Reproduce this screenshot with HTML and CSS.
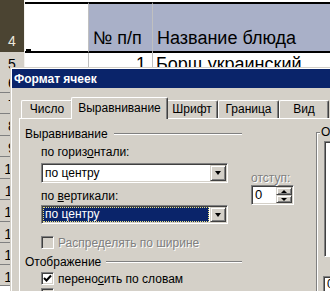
FILE: index.html
```html
<!DOCTYPE html>
<html lang="ru">
<head>
    <meta charset="UTF-8">
    <title>Формат ячеек</title>
    <link rel="stylesheet" href="styles.css">
</head>
<body>
    <div class="sheet">
        <div class="row r4">
            <div class="rh sel">4</div>
            <div class="cell colA"></div>
            <div class="cell hd">№ п/п</div>
            <div class="cell hd last">Название блюда</div>
        </div>
        <div class="row r5">
            <div class="rh">5</div>
            <div class="cell"></div>
            <div class="cell num">1</div>
            <div class="cell last">Борщ украинский</div>
        </div>
        <div class="row"><div class="rh">6</div><div class="cell"></div><div class="cell"></div><div class="cell last"></div></div>
        <div class="row"><div class="rh">7</div><div class="cell"></div><div class="cell"></div><div class="cell last"></div></div>
        <div class="row"><div class="rh">8</div><div class="cell"></div><div class="cell"></div><div class="cell last"></div></div>
        <div class="row"><div class="rh">9</div><div class="cell"></div><div class="cell"></div><div class="cell last"></div></div>
        <div class="row"><div class="rh">10</div><div class="cell"></div><div class="cell"></div><div class="cell last"></div></div>
        <div class="row"><div class="rh">11</div><div class="cell"></div><div class="cell"></div><div class="cell last"></div></div>
        <div class="row"><div class="rh">12</div><div class="cell"></div><div class="cell"></div><div class="cell last"></div></div>
        <div class="row"><div class="rh">13</div><div class="cell"></div><div class="cell"></div><div class="cell last"></div></div>
        <div class="row"><div class="rh">14</div><div class="cell"></div><div class="cell"></div><div class="cell last"></div></div>
        <div class="row"><div class="rh">15</div><div class="cell"></div><div class="cell"></div><div class="cell last"></div></div>
    </div>

    <!-- dialog window over the sheet -->
    <div class="dialog">
        <div class="title">Формат ячеек</div>
        <div class="dbody">
            <div class="tabs">
                <div class="tab w1">Число</div>
                <div class="tab sel">Выравнивание</div>
                <div class="tab w3">Шрифт</div>
                <div class="tab w4">Граница</div>
                <div class="tab w5">Вид</div>
            </div>
            <div class="panel">
                <div class="left">
                    <div class="legend">Выравнивание</div>
                    <div class="align">
                        <div class="combos">
                            <div class="lbl">по гориз<u>о</u>нтали:</div>
                            <div class="combo">
                                <span class="val">по центру</span>
                                <span class="btn"></span>
                            </div>
                            <div class="lbl lbl2">по <u>в</u>ертикали:</div>
                            <div class="combo combo2">
                                <span class="val hl">по центру</span>
                                <span class="btn"></span>
                            </div>
                        </div>
                        <div class="indent">
                            <div class="lbl off">отступ:</div>
                            <div class="spin">
                                <span class="val">0</span>
                                <span class="arrows">
                                    <span class="sbtn up"></span>
                                    <span class="sbtn down"></span>
                                </span>
                            </div>
                        </div>
                    </div>
                    <div class="check dis">
                        <span class="box"></span>
                        <span class="off">Распределять по ширине</span>
                    </div>
                    <div class="legend legend2">Отображение</div>
                    <div class="check c2">
                        <span class="box on">
                            <svg width="9" height="9" viewBox="0 0 9 9"><path d="M1 4 L3.5 6.5 L8 1.5" stroke="#000" stroke-width="2" fill="none"/></svg>
                        </span>
                        <span>перено<u>с</u>ить по словам</span>
                    </div>
                    <div class="check c3">
                        <span class="box dimbox"></span>
                    </div>
                </div>
                <div class="right">
                    <div class="orient">
                        <span class="olbl">Ориентация</span>
                        <div class="obox"></div>
                        <div class="deg">0</div>
                    </div>
                </div>
            </div>
        </div>
    </div>
</body>
</html>
```

FILE: styles.css
```css
body {
    margin: 0;
    background: #fff;
    overflow: hidden;
    font-family: "Liberation Sans", Arial, sans-serif;
}

/* spreadsheet behind the dialog */
.sheet {
    width: 330px;
    height: 291px;
    overflow: hidden;
}
.row {
    display: grid;
    grid-template-columns: 25px 64px 64px 1fr;
    height: 21.5px;
}
.rh {
    background: #d4d0c8;
    border-right: 1px solid #f4f2ee;
    border-bottom: 1px solid #808080;
    box-sizing: border-box;
    font-size: 14px;
    line-height: 14px;
    text-align: center;
    color: #000;
    padding-top: 5px;
}
.rh.sel {
    background: #4b4432;
    color: #ece8dc;
    border-bottom: none;
    padding-top: 34px;
    height: 53px;
}
.cell {
    box-sizing: border-box;
    border-right: 1px solid #c0c0c0;
    border-bottom: 1px solid #c0c0c0;
    font-size: 18px;
    overflow: hidden;
    white-space: nowrap;
}
.cell.last {
    border-right: none;
}
.r4 {
    height: 52px;
}
.r4 .cell {
    margin-top: 2px;
    border-top: 2px solid #000;
    border-bottom: 2px solid #000;
    padding: 24px 3px 0 4px;
}
.r4 .hd {
    background: #a9b0c8;
}
.colA {
    position: relative;
}
.colA::before {
    content: "";
    position: absolute;
    left: 1px;
    bottom: -3px;
    width: 5px;
    height: 5px;
    background: #000;
}
.r5 {
    height: 19px;
}
.r5 .cell {
    padding: 2px 3px 0 3px;
}
.num {
    text-align: right;
    padding-right: 6px !important;
}

/* dialog */
.dialog {
    position: absolute;
    left: 10px;
    top: 67px;
    width: 319px;
    height: 223px;
    overflow: hidden;
    background: #d4d0c8;
    border-top: 1px solid #d4d0c8;
    border-left: 1px solid #d4d0c8;
    box-shadow: inset 1px 1px #fff;
    padding: 1px 0 0 1px;
    font-size: 11px;
    color: #000;
}
.title {
    height: 19px;
    background: #0a246a;
    color: #fff;
    font-weight: bold;
    font-size: 12px;
    line-height: 20px;
    padding-left: 2px;
}
.dbody {
    padding: 9px 0 0 7px;
}
.tabs {
    display: flex;
    align-items: flex-end;
    height: 21px;
    padding-left: 2px;
    position: relative;
    z-index: 1;
}
.tab {
    box-sizing: border-box;
    flex: none;
    height: 18px;
    border-top: 1px solid #fff;
    border-left: 1px solid #fff;
    border-right: 1px solid #404040;
    box-shadow: inset -1px 0 #808080;
    border-radius: 2px 2px 0 0;
    background: #d4d0c8;
    text-align: center;
    line-height: 17px;
    font-size: 12px;
}
.w1 { width: 52px; }
.w3 { width: 52px; }
.w4 { width: 61px; }
.w5 { width: 50px; }
.tab.sel {
    width: 97px;
    height: 22px;
    margin: 0 -2px -1px -2px;
    position: relative;
    z-index: 2;
    line-height: 20px;
}
.panel {
    display: flex;
    border-top: 1px solid #fff;
    border-left: 1px solid #fff;
    height: 200px;
}
.left {
    width: 288px;
    padding-left: 5px;
    flex: none;
}
.legend {
    display: flex;
    align-items: center;
    width: 217px;
    height: 12px;
    margin-top: 9px;
    font-size: 12px;
}
.legend::after {
    content: "";
    flex: 1;
    margin-left: 6px;
    border-top: 1px solid #808080;
    border-bottom: 1px solid #fff;
}
.legend2 {
    margin-top: 7px;
}
.legend2::after {
    margin-left: 5px;
}
.align {
    display: flex;
    margin-top: 6px;
    margin-left: 16px;
}
.combos {
    width: 187px;
}
.lbl {
    height: 12px;
    line-height: 12px;
    font-size: 12px;
}
.lbl2 {
    margin-top: 7px;
}
.combo {
    display: flex;
    align-items: center;
    box-sizing: border-box;
    height: 20px;
    margin-top: 5px;
    background: #fff;
    border: 1px solid;
    border-color: #808080 #fff #fff #808080;
    box-shadow: inset 1px 1px #404040, inset -1px -1px #d4d0c8;
    padding: 1px;
}
.combo2 {
    height: 19px;
    margin-top: 3px;
}
.val {
    flex: 1;
    font-size: 12px;
    padding-left: 2px;
    height: 100%;
    line-height: 16px;
}
.val.hl {
    background: #0a246a;
    color: #fff;
    outline: 1px dotted #e8e080;
    outline-offset: -1px;
    margin-right: 1px;
    line-height: 15px;
}
.btn {
    position: relative;
    box-sizing: border-box;
    width: 16px;
    height: 16px;
    background: #d4d0c8;
    border: 1px solid;
    border-color: #d4d0c8 #404040 #404040 #d4d0c8;
    box-shadow: inset 1px 1px #fff, inset -1px -1px #808080;
}
.combo2 .btn {
    height: 15px;
}
.btn::after {
    content: "";
    position: absolute;
    left: 4px;
    top: 5px;
    border-left: 3.5px solid transparent;
    border-right: 3.5px solid transparent;
    border-top: 4px solid #000;
}
.indent {
    margin-left: 23px;
    padding-top: 26px;
    width: 43px;
}
.off {
    color: #808080;
    text-shadow: 1px 1px #fff;
}
.spin {
    display: flex;
    box-sizing: border-box;
    height: 20px;
    margin-top: 1px;
    background: #fff;
    border: 1px solid;
    border-color: #808080 #fff #fff #808080;
    box-shadow: inset 1px 1px #404040, inset -1px -1px #d4d0c8;
    padding: 1px;
}
.spin .val {
    padding-left: 2px;
    font-size: 13px;
}
.arrows {
    display: flex;
    flex-direction: column;
    width: 16px;
}
.sbtn {
    position: relative;
    box-sizing: border-box;
    flex: 1;
    background: #d4d0c8;
    border: 1px solid;
    border-color: #d4d0c8 #404040 #404040 #d4d0c8;
    box-shadow: inset 1px 1px #fff, inset -1px -1px #808080;
}
.sbtn::after {
    content: "";
    position: absolute;
    left: 4px;
    top: 2px;
    border-left: 3.5px solid transparent;
    border-right: 3.5px solid transparent;
}
.up::after {
    border-bottom: 3px solid #000;
}
.down::after {
    border-top: 3px solid #000;
}
.check {
    display: flex;
    align-items: center;
    height: 13px;
    margin-left: 16px;
    margin-top: 12px;
    font-size: 12px;
}
.c2 {
    margin-top: 4px;
}
.c3 {
    margin-top: 3px;
}
.box {
    box-sizing: border-box;
    width: 13px;
    height: 13px;
    margin-right: 4px;
    border: 1px solid;
    border-color: #808080 #fff #fff #808080;
    box-shadow: inset 1px 1px #404040, inset -1px -1px #d4d0c8;
    background: #d4d0c8;
    display: flex;
    align-items: center;
    justify-content: center;
}
.box.on {
    background: #fff;
}
.dimbox {
    background: #d4d0c8;
}
.right {
    flex: 1;
    padding-left: 3px;
    overflow: hidden;
}
.orient {
    margin-top: 13px;
    border-top: 1px solid #808080;
    border-left: 1px solid #808080;
    box-shadow: inset 1px 1px #fff;
    height: 180px;
}
.olbl {
    display: block;
    margin: -7px 0 0 3px;
    padding: 0 1px;
    width: max-content;
    background: #d4d0c8;
    font-size: 12px;
    line-height: 12px;
}
.obox {
    margin: 3px 0 0 7px;
    height: 114px;
    background: #fff;
    border-left: 1px solid #808080;
    border-top: 1px solid #808080;
    border-bottom: 1px solid #fff;
    box-shadow: inset 1px 1px #404040;
}
.deg {
    margin: 19px 0 0 6px;
    height: 18px;
    background: #fff;
    border-left: 1px solid #808080;
    border-top: 1px solid #808080;
    box-shadow: inset 1px 1px #404040;
    font-size: 12px;
    padding-left: 3px;
}
```
